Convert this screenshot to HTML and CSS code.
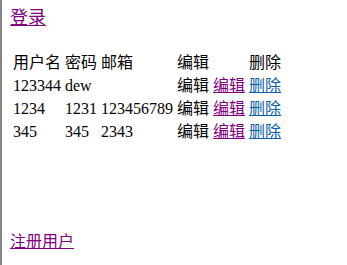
FILE: index.html
```html
<!DOCTYPE html>
<html lang="zh-CN">
<head>
<meta charset="UTF-8" />
<title>用户列表</title>
<link rel="stylesheet" href="styles.css">
</head>
<body>
  <div class="top">
    <a href="#" class="login visited">登录</a>
  </div>

  <table class="users">
    <tr>
      <td>用户名</td>
      <td>密码</td>
      <td>邮箱</td>
      <td>编辑</td>
      <td></td>
      <td>删除</td>
    </tr>
    <tr>
      <td>123344</td>
      <td>dew</td>
      <td></td>
      <td>编辑</td>
      <td><a href="#" class="visited">编辑</a></td>
      <td><a href="#">删除</a></td>
    </tr>
    <tr>
      <td>1234</td>
      <td>1231</td>
      <td>123456789</td>
      <td>编辑</td>
      <td><a href="#" class="visited">编辑</a></td>
      <td><a href="#">删除</a></td>
    </tr>
    <tr>
      <td>345</td>
      <td>345</td>
      <td>2343</td>
      <td>编辑</td>
      <td><a href="#" class="visited">编辑</a></td>
      <td><a href="#">删除</a></td>
    </tr>
  </table>

  <div class="bottom">
    <a href="#" class="visited">注册用户</a>
  </div>
</body>
</html>
```

FILE: styles.css
```css
html {
  height: 100%;
  border-left: 2px solid #858585;
  box-sizing: border-box;
  background: #fff;
}

body {
  margin: 8px;
  font-family: 'Liberation Serif', 'Noto Sans CJK SC', serif;
  font-size: 16px;
  line-height: 19px;
  color: #000;
}

a {
  color: #0b5ea8;
  text-decoration: underline;
}

a.visited {
  color: #800080;
}

.top {
  height: 21px;
  line-height: 21px;
}

.login {
  font-size: 18px;
}

.users {
  margin-top: 21px;
  border-collapse: separate;
  border-spacing: 2px;
  margin-left: 0;
}

.users td {
  padding: 1px;
  text-align: left;
  vertical-align: middle;
  white-space: nowrap;
  line-height: 19px;
}

.bottom {
  margin-top: 88px;
}
```
